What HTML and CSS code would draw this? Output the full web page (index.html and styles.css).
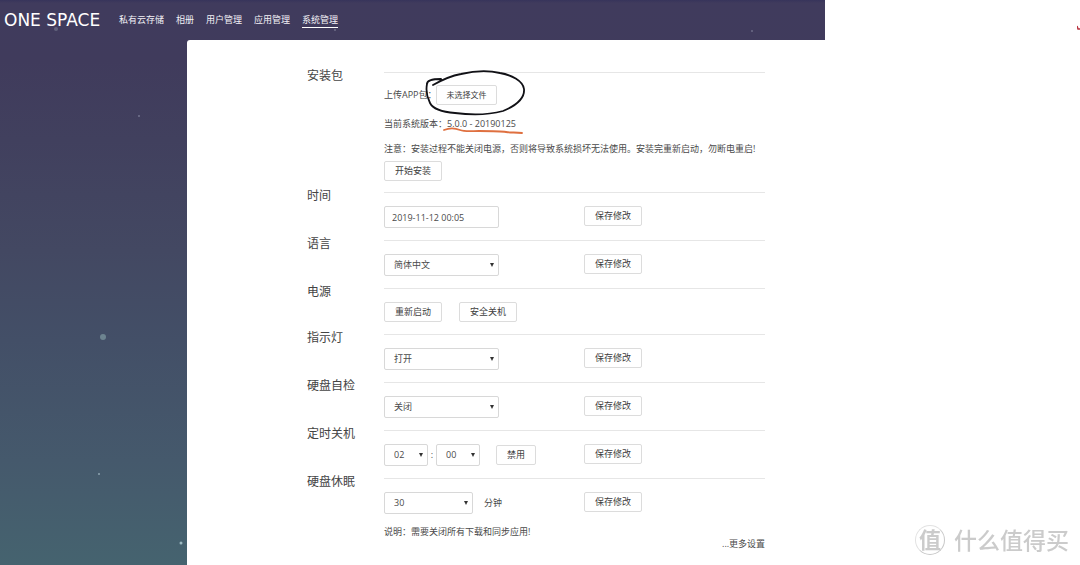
FILE: index.html
```html
<!DOCTYPE html>
<html lang="zh-CN">
<head>
<meta charset="utf-8">
<title>ONE SPACE</title>
<link rel="stylesheet" href="styles.css">
</head>
<body>
<div class="app">
  <svg class="stars" aria-hidden="true">
    <circle cx="56" cy="29" r="2" fill="#7a7d93" opacity=".6"/>
    <circle cx="335" cy="30" r="1" fill="#8a8ca4" opacity=".6"/>
    <circle cx="752" cy="31" r="1" fill="#8a8ca4" opacity=".6"/>
    <circle cx="139" cy="116" r="1" fill="#8a8ca4" opacity=".7"/>
    <circle cx="103" cy="337" r="3" fill="#6d8490"/>
    <circle cx="99" cy="474" r="1" fill="#8ea5b0"/>
    <circle cx="181" cy="543" r="1.5" fill="#9dbac2"/>
  </svg>
  <header class="topbar">
    <a class="logo" href="#">ONE SPACE</a>
    <nav class="nav">
      <a href="#">私有云存储</a>
      <a href="#">相册</a>
      <a href="#">用户管理</a>
      <a href="#">应用管理</a>
      <a href="#" class="current">系统管理</a>
    </nav>
  </header>
  <main class="panel">
    <section class="group">
      <h2>安装包</h2>
      <div class="body install">
        <div class="upload"><label for="pkg">上传APP包：</label><button class="btn file" id="pkg" type="button">未选择文件</button></div>
        <p class="version">当前系统版本：<span>5.0.0 - 20190125</span></p>
        <p class="notice">注意：安装过程不能关闭电源，否则将导致系统损坏无法使用。安装完重新启动，勿断电重启!</p>
        <button class="btn" type="button">开始安装</button>
        <svg class="marks" viewBox="0 0 160 74" aria-hidden="true">
          <path d="M49 12C56 8 66 3 77 1C90 -2 103 -3 116 0C128 2 139 8 140 16C141 26 131 33 119 38C104 42 86 42 71 40C58 39 49 36 46 30C43 24 42 16 43 11C43 7 50 6 57 6" fill="none" stroke="#111116" stroke-width="1.8" stroke-linecap="round"/>
          <path d="M60 57C65 55 71 55 76 57C81 59 88 58 95 58C107 58 117 58 122 59C127 60 132 59 138 60" fill="none" stroke="#df7040" stroke-width="1.8" stroke-linecap="round"/>
        </svg>
      </div>
    </section>
    <section class="group">
      <h2>时间</h2>
      <div class="body row">
        <div class="fields"><input class="field wide" type="text" aria-label="时间" value="2019-11-12 00:05"></div>
        <button class="btn" type="button">保存修改</button>
      </div>
    </section>
    <section class="group">
      <h2>语言</h2>
      <div class="body row">
        <div class="fields"><select class="field wide" aria-label="语言"><option>简体中文</option></select></div>
        <button class="btn" type="button">保存修改</button>
      </div>
    </section>
    <section class="group">
      <h2>电源</h2>
      <div class="body power">
        <button class="btn" type="button">重新启动</button>
        <button class="btn" type="button">安全关机</button>
      </div>
    </section>
    <section class="group">
      <h2>指示灯</h2>
      <div class="body row">
        <div class="fields"><select class="field wide" aria-label="指示灯"><option>打开</option></select></div>
        <button class="btn" type="button">保存修改</button>
      </div>
    </section>
    <section class="group">
      <h2>硬盘自检</h2>
      <div class="body row">
        <div class="fields"><select class="field wide" aria-label="硬盘自检"><option>关闭</option></select></div>
        <button class="btn" type="button">保存修改</button>
      </div>
    </section>
    <section class="group">
      <h2>定时关机</h2>
      <div class="body row">
        <div class="fields">
          <select class="field short" aria-label="小时"><option>02</option></select><span class="colon">:</span><select class="field short" aria-label="分钟"><option>00</option></select>
          <button class="btn toggle" type="button">禁用</button>
        </div>
        <button class="btn" type="button">保存修改</button>
      </div>
    </section>
    <section class="group">
      <h2>硬盘休眠</h2>
      <div class="body last">
        <div class="row">
          <div class="fields"><select class="field medium" id="sleep"><option>30</option></select><label class="unit" for="sleep">分钟</label></div>
          <button class="btn" type="button">保存修改</button>
        </div>
        <div class="foot">
          <p>说明：需要关闭所有下载和同步应用!</p>
          <a class="more" href="#">...更多设置</a>
        </div>
      </div>
    </section>
  </main>
</div>
<svg class="tick" viewBox="0 0 3 6" aria-hidden="true"><path d="M0 1L1 4L3 4" fill="none" stroke="#b8323f" stroke-width="1.5"/></svg>
<div class="watermark"><span class="seal">值</span><span>什么值得买</span></div>
</body>
</html>
```
FILE: styles.css
```css
* { box-sizing: border-box; }
body {
  margin: 0;
  background: #fff;
  color: #4a4a4a;
  font: 9px/18px "Open Sans", "Noto Sans CJK SC", sans-serif;
}
h2, p { margin: 0; font-weight: 400; }
a { color: inherit; text-decoration: none; }
.app {
  position: relative;
  display: flex;
  flex-direction: column;
  width: 76.4%;
  min-height: 100vh;
  background: linear-gradient(#37345b 0, #403b5d 3px, #403b5c 60px, #41405e 140px, #434862 250px, #434f67 340px, #45596c 460px, #45636f 100%);
}
.stars {
  position: absolute;
  inset: 0;
  width: 100%;
  height: 100%;
  pointer-events: none;
}
.topbar {
  position: relative;
  display: flex;
  align-items: center;
  height: 40px;
  padding-left: 4px;
  color: #f2f1f6;
}
.logo {
  width: 115px;
  font: 17px/20px "DejaVu Sans", sans-serif;
  color: #fff;
  white-space: nowrap;
}
.nav { display: flex; gap: 12px; line-height: 14px; white-space: nowrap; }
.nav a { border-bottom: 1px solid transparent; }
.nav .current { border-color: #fff; }
.panel {
  position: relative;
  flex: 1;
  margin-left: 187px;
  padding: 32px 60px 0 120px;
  background: #fff;
  border-top-left-radius: 3px;
}
.group { display: grid; grid-template-columns: 77px 1fr; }
.group h2 {
  margin-top: -5px;
  font-size: 12px;
  line-height: 18px;
  color: #444;
  white-space: nowrap;
}
.body { padding: 13px 0 12px; border-top: 1px solid #e6e6e6; }
.row { display: grid; grid-template-columns: 200px 1fr; align-items: start; justify-items: start; }
.fields { display: flex; align-items: center; }
.btn {
  height: 20px;
  min-width: 58px;
  padding: 0 9px;
  border: 1px solid #dcdcdc;
  border-radius: 2px;
  background: #fff;
  color: #404040;
  font: inherit;
  line-height: 18px;
  white-space: nowrap;
}
.install { position: relative; padding: 12px 0 11px; }
.upload { display: flex; align-items: center; height: 20px; margin-bottom: 10px; }
.upload label { width: 52px; white-space: nowrap; }
.file { min-width: 61px; font-size: 8px; }
.version { margin-bottom: 7px; }
.notice { margin-bottom: 3px; white-space: nowrap; }
.marks {
  position: absolute;
  left: 0;
  top: 0;
  width: 160px;
  height: 74px;
  overflow: visible;
  pointer-events: none;
}
.field {
  height: 22px;
  margin: 0;
  padding: 0 7px;
  border: 1px solid #d8d8d8;
  border-radius: 2px;
  background: #fff;
  color: #4a4a4a;
  font: inherit;
}
select.field {
  appearance: none;
  padding: 0 9px;
  background: #fff url("data:image/svg+xml,%3Csvg xmlns='http://www.w3.org/2000/svg' width='4' height='4'%3E%3Cpath d='M0 0h4L2 4z' fill='%23333'/%3E%3C/svg%3E") no-repeat right 4px center;
}
.wide { width: 115px; }
.medium { width: 89px; }
.short { width: 44px; }
.colon { width: 8px; text-align: center; }
.toggle { min-width: 40px; margin-left: 16px; }
.power { display: flex; gap: 17px; }
.unit { margin-left: 11px; }
.last { padding-bottom: 0; }
.foot { display: flex; justify-content: space-between; height: 30px; margin-top: 9px; }
.more { align-self: flex-end; }
.tick { position: absolute; right: 0; top: 25px; width: 3px; height: 6px; }
.watermark {
  position: fixed;
  right: 11px;
  bottom: 10px;
  display: flex;
  align-items: center;
  gap: 9px;
  color: #cbcbcb;
  font-size: 23px;
  font-weight: 500;
  line-height: 30px;
}
.seal {
  width: 30px;
  height: 30px;
  border: 1px solid #e2e2e2;
  border-right-color: #c8c8c8;
  border-bottom-color: #c8c8c8;
  border-radius: 50%;
  font-size: 22px;
  font-weight: 700;
  line-height: 27px;
  text-align: center;
}
```
